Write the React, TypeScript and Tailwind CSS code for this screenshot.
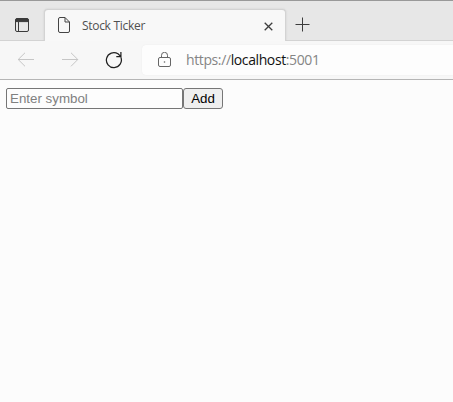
import React from 'react';

function TabStrip() {
  return (
    <div className="flex h-[41px] items-stretch border-t border-[#999] bg-[#e7e7e7]">
      <div className="flex w-11 shrink-0 border-b border-[#d3d3d3] pl-[15px] pt-[17px]">
        <svg width="14" height="14" viewBox="0 0 14 14" fill="none" stroke="#3b3b3b">
          <rect x="0.5" y="0.5" width="13" height="13" rx="1.5" />
          <path d="M1 1h12v2.6H1z" fill="#3b3b3b" />
          <path d="M3.5 4v9.5" />
        </svg>
      </div>
      <div className="mt-2 flex h-8 w-[242px] shrink-0 rounded-t-[4px] border-x border-t border-[#d3d3d3] bg-[#f8f8f8] pl-[13px] pt-[7px] shadow-[0_0_2px_#c8c8c8] [clip-path:inset(-3px_-3px_0_-3px)]">
        <svg className="shrink-0" width="12" height="16" viewBox="0 0 12 16" fill="none" stroke="#444">
          <path d="M2 .5h5l4.5 4.5v9a1.5 1.5 0 0 1-1.5 1.5H2A1.5 1.5 0 0 1 .5 14V2A1.5 1.5 0 0 1 2 .5ZM7 .5V5h4.5" />
        </svg>
        <span className="ml-3 w-[182px] whitespace-nowrap pt-px text-[12px] leading-4 tracking-[-0.3px] text-[#505050]">Stock Ticker</span>
        <svg className="mt-[5px] shrink-0" width="9" height="9" viewBox="0 0 9 9" fill="none" stroke="#3d3d3d" strokeWidth="1.3">
          <path d="m.7.7 7.6 7.6m0-7.6L.7 8.3" />
        </svg>
      </div>
      <div className="flex-1 border-b border-[#d3d3d3] pl-[9px] pt-4">
        <svg width="15" height="15" viewBox="0 0 15 15" stroke="#3c3c3c">
          <path d="M7.5.5v14M.5 7.5h14" />
        </svg>
      </div>
    </div>
  );
}

function Toolbar() {
  return (
    <div className="flex h-[39px] items-start border-b border-[#b5b5b5] bg-[#f7f7f7]">
      <svg className="ml-[17px] mt-[11px] shrink-0" width="18" height="16" viewBox="0 0 18 16" fill="none" stroke="#c6c6c6">
        <path d="M17 7.5H1M8 .8 1.2 7.5 8 14.3" />
      </svg>
      <svg className="ml-[27px] mt-[11px] shrink-0" width="18" height="16" viewBox="0 0 18 16" fill="none" stroke="#c6c6c6">
        <path d="M0 7.5h16M9 .8l6.8 6.7L9 14.3" />
      </svg>
      <svg className="ml-[25px] mt-[10px] shrink-0" width="18" height="18" viewBox="0 0 18 18" fill="none" stroke="#202020" strokeWidth="1.25">
        <path d="M15.9 6.4A7.5 7.5 0 1 1 13 2.8l2.4 2.3M15.9.9v4.6h-4.6" />
      </svg>
      <div className="ml-[19px] mt-1 flex h-[30px] flex-1 rounded-l-[4px] bg-[#fdfdfd] shadow-[0_0_1px_#e2e2e2]">
        <svg className="ml-4 mt-[7px] shrink-0" width="13" height="16" viewBox="0 0 13 16" fill="none" stroke="#666">
          <rect x=".5" y="5.5" width="12" height="9" rx="1.5" />
          <path d="M3.5 5.5V3.3a3 3 0 0 1 6 0v2.2" />
          <circle cx="6.5" cy="10" r=".8" fill="#666" stroke="none" />
        </svg>
        <div className="ml-[15px] whitespace-nowrap pt-[5px] text-[14px] leading-5 tracking-[-0.39px] text-[#858585]">
          https://<span className="text-[#111]">localhost</span>:5001
        </div>
      </div>
    </div>
  );
}

export default function App() {
  return (
    <div className="h-[402px] overflow-hidden bg-[#fcfcfc] font-['Open_Sans','Noto_Sans',sans-serif]">
      <TabStrip />
      <Toolbar />
      <div className="flex pl-1.5 pt-2 font-['Liberation_Sans',Arial,sans-serif] text-[13.333px]">
        <input
          placeholder="Enter symbol"
          className="h-[21px] w-[177px] rounded-[2px] border border-[#767676] bg-[#fdfdfd] px-[3px] text-black placeholder:text-[#808080]"
        />
        <button className="h-[21px] w-10 rounded-[3px] border border-[#767676] bg-[#efefef] leading-[19px] text-black">Add</button>
      </div>
    </div>
  );
}
